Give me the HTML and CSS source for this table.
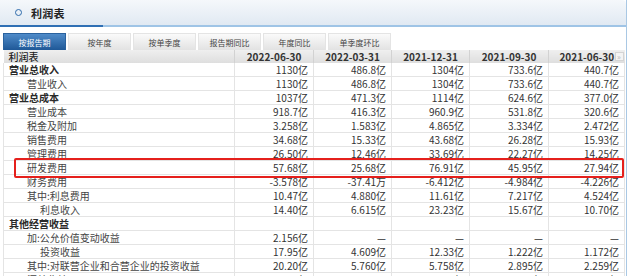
FILE: index.html
```html
<!DOCTYPE html>
<html lang="zh-CN">

<head>
    <meta charset="UTF-8" />
    <meta name="viewport" content="width=device-width, initial-scale=1.0" />
    <title>利润表</title>
    <link rel="stylesheet" href="styles.css">
</head>

<body>
    <div class="panel">
        <div class="panel-head">
            <span class="dot"></span>
            <h3>利润表</h3>
        </div>

        <div class="tabs">
            <span class="tab active">按报告期</span>
            <span class="tab">按年度</span>
            <span class="tab">按单季度</span>
            <span class="tab">报告期同比</span>
            <span class="tab">年度同比</span>
            <span class="tab">单季度环比</span>
        </div>

        <div class="grid-wrap">
            <table class="report">
                <colgroup>
                    <col class="c-name">
                    <col class="c-79">
                    <col class="c-78">
                    <col class="c-78">
                    <col class="c-79">
                    <col class="c-76">
                </colgroup>
                <thead>
                    <tr>
                        <th class="name">利润表</th>
                        <th>2022-06-30</th>
                        <th>2022-03-31</th>
                        <th>2021-12-31</th>
                        <th>2021-09-30</th>
                        <th class="last">2021-06-30<span class="more">»</span></th>
                    </tr>
                </thead>
                <tbody>
                    <tr class="lv0">
                        <td>营业总收入</td><td>1130亿</td><td>486.8亿</td><td>1304亿</td><td>733.6亿</td><td>440.7亿</td>
                    </tr>
                    <tr class="lv1">
                        <td>营业收入</td><td>1130亿</td><td>486.8亿</td><td>1304亿</td><td>733.6亿</td><td>440.7亿</td>
                    </tr>
                    <tr class="lv0">
                        <td>营业总成本</td><td>1037亿</td><td>471.3亿</td><td>1114亿</td><td>624.6亿</td><td>377.0亿</td>
                    </tr>
                    <tr class="lv1">
                        <td>营业成本</td><td>918.7亿</td><td>416.3亿</td><td>960.9亿</td><td>531.8亿</td><td>320.6亿</td>
                    </tr>
                    <tr class="lv1">
                        <td>税金及附加</td><td>3.258亿</td><td>1.583亿</td><td>4.865亿</td><td>3.334亿</td><td>2.472亿</td>
                    </tr>
                    <tr class="lv1">
                        <td>销售费用</td><td>34.68亿</td><td>15.33亿</td><td>43.68亿</td><td>26.28亿</td><td>15.93亿</td>
                    </tr>
                    <tr class="lv1">
                        <td>管理费用</td><td>26.50亿</td><td>12.46亿</td><td>33.69亿</td><td>22.27亿</td><td>14.25亿</td>
                    </tr>
                    <tr class="lv1">
                        <td>研发费用</td><td>57.68亿</td><td>25.68亿</td><td>76.91亿</td><td>45.95亿</td><td>27.94亿</td>
                    </tr>
                    <tr class="lv1">
                        <td>财务费用</td><td>-3.578亿</td><td>-37.41万</td><td>-6.412亿</td><td>-4.984亿</td><td>-4.226亿</td>
                    </tr>
                    <tr class="lv1">
                        <td>其中:利息费用</td><td>10.47亿</td><td>4.880亿</td><td>11.61亿</td><td>7.217亿</td><td>4.524亿</td>
                    </tr>
                    <tr class="lv2">
                        <td>利息收入</td><td>14.40亿</td><td>6.615亿</td><td>23.23亿</td><td>15.67亿</td><td>10.70亿</td>
                    </tr>
                    <tr class="lv0">
                        <td>其他经营收益</td><td></td><td></td><td></td><td></td><td></td>
                    </tr>
                    <tr class="lv1">
                        <td>加:公允价值变动收益</td><td>2.156亿</td><td>—</td><td>—</td><td>—</td><td>—</td>
                    </tr>
                    <tr class="lv2">
                        <td>投资收益</td><td>17.95亿</td><td>4.609亿</td><td>12.33亿</td><td>1.222亿</td><td>1.172亿</td>
                    </tr>
                    <tr class="lv1">
                        <td>其中:对联营企业和合营企业的投资收益</td><td>20.20亿</td><td>5.760亿</td><td>5.758亿</td><td>2.895亿</td><td>2.259亿</td>
                    </tr>
                    <tr class="lv1">
                        <td>汇兑收益</td><td>11.84亿</td><td>352.1万</td><td>6.841亿</td><td>4.314亿</td><td>3.143亿</td>
                    </tr>
                </tbody>
            </table>

            <div class="highlight"></div>
        </div>
    </div>
</body>

</html>
```

FILE: styles.css
```css
*,
*::before,
*::after {
    box-sizing: border-box;
    margin: 0;
    padding: 0;
}

html,
body {
    height: 100%;
    overflow: hidden;
    background: #fff;
    font-family: 'Noto Sans CJK SC', 'Noto Sans', sans-serif;
    color: #333;
}

.panel {
    width: 627px;
    height: 100%;
    border-right: 1px solid #a9c8e4;
}

/* title bar */
.panel-head {
    height: 27px;
    display: flex;
    align-items: center;
    gap: 9px;
    padding: 0 0 2px 15px;
    background: linear-gradient(#f5f8fb, #dfe8f2);
    border-top-right-radius: 4px;
    position: relative;
}

.panel-head::after {
    content: '';
    position: absolute;
    left: 0;
    right: 0;
    bottom: 0;
    height: 2px;
    background: linear-gradient(to right, #2f6fb4 0, #2f6fb4 103px, #9fc4e6 103px);
}

.dot {
    width: 7px;
    height: 7px;
    border: 1.5px solid #2d6aab;
    border-radius: 50%;
}

.panel-head h3 {
    font-size: 11px;
    font-weight: 700;
    color: #222;
    letter-spacing: 0.3px;
}

/* tabs */
.tabs {
    display: flex;
    gap: 2px;
    margin-top: 6px;
    padding-left: 3px;
}

.tab {
    width: 63px;
    height: 17px;
    line-height: 17px;
    text-align: center;
    font-size: 8px;
    color: #444;
    background: linear-gradient(#fafafa, #e2e2e2);
    border: 1px solid #e4e4e4;
    border-bottom: none;
}

.tab.active {
    color: #fff;
    background: linear-gradient(#4f8bc9, #1f5897);
    border-color: #2a629e;
}

/* table */
.grid-wrap {
    position: relative;
    margin-left: 3px;
}

.report {
    width: 621px;
    table-layout: fixed;
    border-collapse: collapse;
    font-size: 10px;
}

.c-name { width: 231px; }
.c-79 { width: 79px; }
.c-78 { width: 78px; }
.c-76 { width: 76px; }

.report th {
    height: 13px;
    line-height: 12px;
    font-weight: 700;
    text-align: center;
    color: #333;
    background: linear-gradient(#efefef, #dedede);
    border-right: 1px solid #d2d2d2;
    white-space: nowrap;
}

.report th.name {
    text-align: left;
    font-weight: 500;
    padding-left: 5px;
    color: #222;
}

.report th.last {
    position: relative;
    border-right: none;
}

.more {
    position: absolute;
    right: 1px;
    top: 2px;
    width: 9px;
    height: 9px;
    line-height: 8px;
    font-size: 8px;
    font-weight: 400;
    color: #b8b8b8;
    background: #f4f4f4;
    border: 1px solid #d4d4d4;
}

.report td {
    height: 13.8px;
    line-height: 13px;
    padding: 0 5px 0 0;
    text-align: right;
    white-space: nowrap;
    overflow: hidden;
    border: 1px solid #e4e4e4;
    border-top: none;
    color: #333;
}

.report td:first-child {
    text-align: left;
    color: #444;
}

.lv0 td:first-child {
    padding-left: 5px;
    font-weight: 700;
    color: #2a2a2a;
}

.lv1 td:first-child {
    padding-left: 23px;
}

.lv2 td:first-child {
    padding-left: 36px;
}

/* red marker around the R&D row */
.highlight {
    position: absolute;
    left: 11px;
    top: 108px;
    width: 610px;
    height: 20px;
    border: 2px solid #e5201c;
    border-radius: 2px;
    pointer-events: none;
}
```
